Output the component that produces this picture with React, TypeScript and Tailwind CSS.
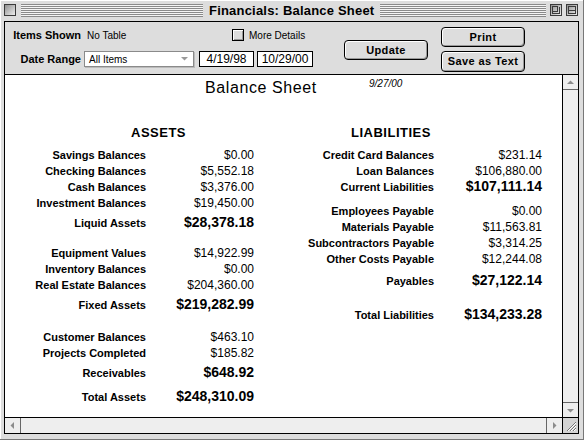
import clsx from "clsx"

type Line = { label: string; value: string; total?: boolean; gap?: string }

const assets: Line[] = [
  { label: "Savings Balances", value: "$0.00", gap: "mt-[6px]" },
  { label: "Checking Balances", value: "$5,552.18" },
  { label: "Cash Balances", value: "$3,376.00" },
  { label: "Investment Balances", value: "$19,450.00" },
  { label: "Liquid Assets", value: "$28,378.18", total: true, gap: "mt-[3px]" },
  { label: "Equipment Values", value: "$14,922.99", gap: "mt-[15px]" },
  { label: "Inventory Balances", value: "$0.00" },
  { label: "Real Estate Balances", value: "$204,360.00" },
  { label: "Fixed Assets", value: "$219,282.99", total: true, gap: "mt-[3px]" },
  { label: "Customer Balances", value: "$463.10", gap: "mt-[17px]" },
  { label: "Projects Completed", value: "$185.82" },
  { label: "Receivables", value: "$648.92", total: true, gap: "mt-[3px]" },
  { label: "Total Assets", value: "$248,310.09", total: true, gap: "mt-[8px]" },
]

const liabilities: Line[] = [
  { label: "Credit Card Balances", value: "$231.14", gap: "mt-[6px]" },
  { label: "Loan Balances", value: "$106,880.00" },
  { label: "Current Liabilities", value: "$107,111.14", total: true, gap: "-mt-px" },
  { label: "Employees Payable", value: "$0.00", gap: "mt-[9px]" },
  { label: "Materials Payable", value: "$11,563.81" },
  { label: "Subcontractors Payable", value: "$3,314.25" },
  { label: "Other Costs Payable", value: "$12,244.08" },
  { label: "Payables", value: "$27,122.14", total: true, gap: "mt-[5px]" },
  { label: "Total Liabilities", value: "$134,233.28", total: true, gap: "mt-[18px]" },
]

const stripes =
  "h-[13px] bg-[repeating-linear-gradient(180deg,#8a8a8a_0px,#8a8a8a_1px,#f4f4f4_1px,#f4f4f4_2px)]"

function TitleBox({ kind }: { kind: "close" | "zoom" | "collapse" }) {
  return (
    <svg width="12" height="12" viewBox="0 0 12 12" shapeRendering="crispEdges" className="shrink-0">
      <defs>
        <linearGradient id={`g-${kind}`} x1="0" y1="0" x2="1" y2="1">
          <stop offset="0" stopColor="#8c8c8c" />
          <stop offset="1" stopColor="#f2f2f2" />
        </linearGradient>
      </defs>
      <rect x="0.5" y="0.5" width="11" height="11" fill={`url(#g-${kind})`} stroke="#3a3a3a" />
      {kind === "zoom" && <path d="M2.5 2.5h5v5h-5zM2.5 2.5v7h7v-7" fill="none" stroke="#3a3a3a" />}
      {kind === "collapse" && <path d="M2.5 2.5h7v7h-7zM2.5 6.5h7" fill="none" stroke="#3a3a3a" />}
    </svg>
  )
}

function Button({ label, className }: { label: string; className?: string }) {
  return (
    <div
      className={clsx(
        "flex h-[20px] w-[84px] items-center justify-center rounded-[4px] border border-black bg-[#dddddd] text-[11px] font-bold tracking-[0.4px] whitespace-nowrap shadow-[inset_1px_1px_0_#fff,inset_-1px_-1px_0_#999]",
        className
      )}
    >
      {label}
    </div>
  )
}

function Arrow({ dir }: { dir: "up" | "down" | "left" | "right" }) {
  const pts = {
    up: "4,9 11,9 7.5,5.5",
    down: "4,6 11,6 7.5,9.5",
    left: "9,4 9,11 5.5,7.5",
    right: "6,4 6,11 9.5,7.5",
  }[dir]
  return (
    <svg width="15" height="15" viewBox="0 0 15 15">
      <polygon points={pts} fill="#8c8c8c" />
    </svg>
  )
}

function Column({ title, titlePad, labelW, lines }: { title: string; titlePad: string; labelW: string; lines: Line[] }) {
  return (
    <div className="flex flex-col">
      <div className={clsx("h-4 text-[13px] font-bold leading-4 tracking-[0.5px]", titlePad)}>{title}</div>
      {lines.map((l) => (
        <div key={l.label} className={clsx("flex h-4 items-baseline leading-4 whitespace-nowrap", l.gap)}>
          <span className={clsx("text-right text-[11px] font-bold", labelW)}>{l.label}</span>
          <span className={clsx("w-[108px] text-right", l.total ? "text-[14px] font-bold" : "text-[12px]")}>
            {l.value}
          </span>
        </div>
      ))}
    </div>
  )
}

export default function App() {
  return (
    <div className="flex h-[440px] w-[584px] flex-col border-r border-b border-[#777] bg-[#dddddd] font-['Liberation_Sans',Arial,sans-serif] text-black shadow-[inset_1px_1px_0_#fff] select-none">
      {/* title bar */}
      <div className="flex h-[21px] items-start pt-[4px] pr-[5px] pl-[4px]">
        <TitleBox kind="close" />
        <div className={clsx("ml-[5px] w-[182px]", stripes)} />
        <span className="px-[6px] text-[13px] leading-[13px] font-bold tracking-[0.2px] whitespace-nowrap">
          Financials: Balance Sheet
        </span>
        <div className={clsx("flex-1", stripes)} />
        <div className="ml-[4px]">
          <TitleBox kind="zoom" />
        </div>
        <div className="ml-[4px]">
          <TitleBox kind="collapse" />
        </div>
      </div>

      {/* window body */}
      <div className="mx-1 mb-[5px] flex flex-1 flex-col border border-black">
        {/* controls */}
        <div className="flex h-[53px] border-b border-black">
          <div className="ml-[6px] flex flex-col">
            <div className="mt-[5px] flex h-4 items-center whitespace-nowrap">
              <span className="w-[70px] text-right text-[11px] font-bold">Items Shown</span>
              <span className="ml-[6px] w-[145px] text-[10px]">No Table</span>
              <div className="h-[12px] w-[12px] border border-black bg-[#dddddd] shadow-[inset_1px_1px_0_#fff,inset_-1px_-1px_0_#999]" />
              <span className="ml-[5px] text-[10px]">More Details</span>
            </div>
            <div className="mt-[8px] flex h-4 items-center whitespace-nowrap">
              <span className="w-[70px] text-right text-[11px] font-bold">Date Range</span>
              <div className="ml-[3px] flex h-4 w-[110px] items-center justify-between border border-[#8a8a8a] bg-white pl-[4px] text-[10px] shadow-[1px_1px_0_#bbb]">
                <span>All Items</span>
                <svg width="12" height="8" viewBox="0 0 12 8" className="mr-[2px]">
                  <polygon points="2,2 9,2 5.5,5.5" fill="#9a9a9a" />
                </svg>
              </div>
              <div className="ml-[5px] flex h-4 w-[55px] items-center justify-center border border-black bg-white text-[12px]">
                4/19/98
              </div>
              <div className="ml-[3px] flex h-4 w-[56px] items-center justify-center border border-black bg-white text-[12px]">
                10/29/00
              </div>
            </div>
          </div>
          <Button label="Update" className="mt-[18px] ml-[31px]" />
          <div className="mt-[5px] ml-[13px] flex flex-col gap-[4px]">
            <Button label="Print" />
            <Button label="Save as Text" className="h-[21px]" />
          </div>
        </div>

        {/* report */}
        <div className="flex min-h-0 flex-1">
          <div className="flex-1 bg-white">
            <div className="mt-[3px] flex items-start whitespace-nowrap">
              <span className="ml-[200px] w-[164px] text-[16px] leading-[20px] tracking-[0.6px]">Balance Sheet</span>
              <span className="text-[10px] leading-[12px] italic">9/27/00</span>
            </div>
            <div className="mt-[27px] ml-[25px] flex">
              <Column title="ASSETS" titlePad="pl-[101px]" labelW="w-[116px]" lines={assets} />
              <div className="ml-[46px]">
                <Column title="LIABILITIES" titlePad="pl-[51px]" labelW="w-[134px]" lines={liabilities} />
              </div>
            </div>
          </div>
          <div className="flex w-[16px] flex-col justify-between border-l border-black bg-[#eeeeee]">
            <div className="h-[15px] border-b border-[#666]">
              <Arrow dir="up" />
            </div>
            <div className="h-[15px] border-t border-[#666]">
              <Arrow dir="down" />
            </div>
          </div>
        </div>

        {/* horizontal scroll + size box */}
        <div className="flex h-[16px] border-t border-black">
          <div className="flex flex-1 justify-between bg-[#eeeeee]">
            <div className="w-[16px] border-r border-[#666]">
              <Arrow dir="left" />
            </div>
            <div className="w-[16px] border-l border-[#666]">
              <Arrow dir="right" />
            </div>
          </div>
          <div className="w-[16px] border-l border-black bg-[#d4d4d4]">
            <svg width="15" height="15" viewBox="0 0 15 15">
              <path d="M4 13L13 4M7 13L13 7M10 13L13 10" stroke="#777" strokeWidth="1" />
              <path d="M5 13L13 5M8 13L13 8M11 13L13 11" stroke="#fff" strokeWidth="1" />
            </svg>
          </div>
        </div>
      </div>
    </div>
  )
}
